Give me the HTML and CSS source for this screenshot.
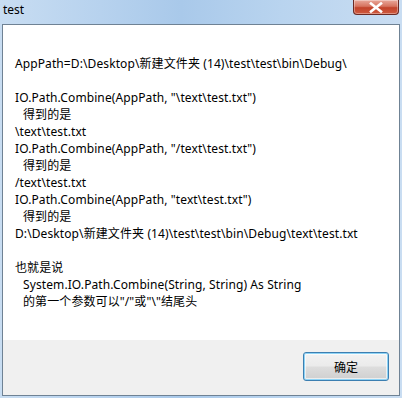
FILE: index.html
```html
<!DOCTYPE html>
<html>
<head>
<meta charset="utf-8">
<link rel="stylesheet" href="styles.css">
</head>
<body>
<div class="window">
  <div class="titlebar">
    <span class="title">test</span>
    <div class="close">
      <svg width="14" height="11" viewBox="0 0 14 11"><path d="M2 1.5 L12 9.5 M12 1.5 L2 9.5" stroke="#ffffff" stroke-width="2.6" stroke-linecap="square" fill="none"/></svg>
    </div>
  </div>
  <div class="client">
    <div class="content">
      <div class="line">AppPath=D:\Desktop\新建文件夹 (14)\test\test\bin\Debug\</div>
      <div class="line">&nbsp;</div>
      <div class="line">IO.Path.Combine(AppPath, "\text\test.txt")</div>
      <div class="line indent">得到的是</div>
      <div class="line">\text\test.txt</div>
      <div class="line">IO.Path.Combine(AppPath, "/text\test.txt")</div>
      <div class="line indent">得到的是</div>
      <div class="line">/text\test.txt</div>
      <div class="line">IO.Path.Combine(AppPath, "text\test.txt")</div>
      <div class="line indent">得到的是</div>
      <div class="line">D:\Desktop\新建文件夹 (14)\test\test\bin\Debug\text\test.txt</div>
      <div class="line">&nbsp;</div>
      <div class="line">也就是说</div>
      <div class="line indent">System.IO.Path.Combine(String, String) As String</div>
      <div class="line indent">的第一个参数可以"/"或"\"结尾头</div>
    </div>
    <div class="footer">
      <button class="ok">确定</button>
    </div>
  </div>
</div>
</body>
</html>
```
FILE: styles.css
```css
html, body {
  margin: 0;
  padding: 0;
}
body {
  width: 402px;
  height: 398px;
  overflow: hidden;
  font-family: "Noto Sans", "Noto Sans CJK SC", sans-serif;
}
.window {
  width: 402px;
  height: 398px;
  box-sizing: border-box;
  padding: 0 2px 2px 2px;
  display: flex;
  flex-direction: column;
  background: linear-gradient(90deg, #c8ddf2 0%, #b7d2ee 25%, #a9c9ea 45%, #b9d4ef 70%, #c9ddf2 100%);
}
.titlebar {
  height: 24px;
  display: flex;
  align-items: flex-start;
  justify-content: space-between;
  flex-shrink: 0;
}
.title {
  font-size: 12px;
  color: #000;
  margin-top: 2px;
  margin-left: 1px;
  line-height: 16px;
}
.close {
  width: 46px;
  height: 15px;
  margin-right: 1px;
  box-sizing: border-box;
  border: 1px solid #6b2a24;
  border-top: none;
  border-radius: 0 0 4px 4px;
  background: linear-gradient(180deg, #e9a99b 0%, #d6735f 45%, #c2432b 55%, #cf5a3f 100%);
  display: flex;
  align-items: center;
  justify-content: center;
  box-shadow: inset 0 0 0 1px rgba(255,255,255,0.35);
}
.client {
  flex: 1;
  border: 1px solid #6f8294;
  background: #ffffff;
  display: flex;
  flex-direction: column;
}
.content {
  flex: 1;
  padding: 30px 0 0 12px;
  font-size: 12px;
  line-height: 17px;
  letter-spacing: 0.1px;
  color: #000;
}
.line {
  white-space: pre;
}
.indent {
  padding-left: 8px;
}
.footer {
  height: 55px;
  background: #f0f0f0;
  display: flex;
  justify-content: flex-end;
  align-items: flex-start;
  padding: 12px 10px 0 0;
  box-sizing: border-box;
  flex-shrink: 0;
}
.ok {
  width: 86px;
  height: 29px;
  box-sizing: border-box;
  border: 1px solid #3c7fb1;
  border-radius: 3px;
  background: linear-gradient(180deg, #f2f2f2 0%, #ebebeb 48%, #dddddd 52%, #cfcfcf 100%);
  box-shadow: inset 0 0 0 1px #8ed3f5, inset 0 0 0 2px rgba(255,255,255,0.6);
  font-family: "Noto Sans CJK SC", sans-serif;
  font-size: 12px;
  color: #000;
  padding: 0;
}
```
